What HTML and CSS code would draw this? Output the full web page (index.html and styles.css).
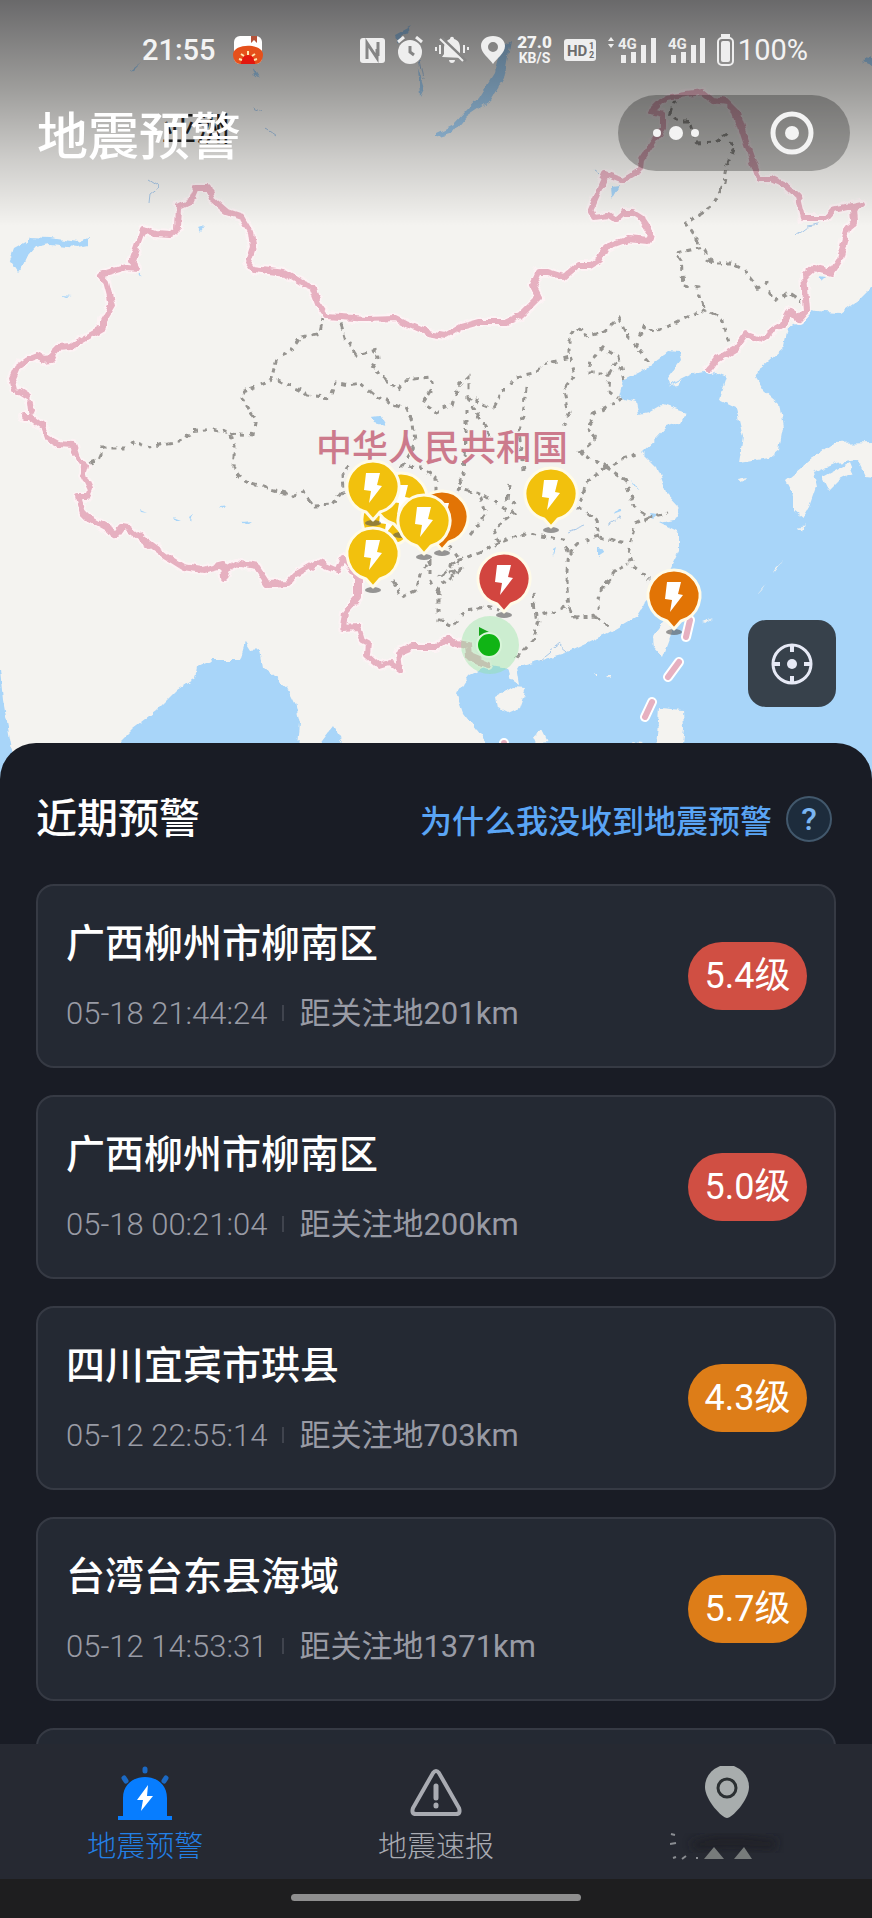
FILE: index.html
```html
<!DOCTYPE html>
<html lang="zh-CN">
  <head>
    <meta charset="UTF-8" />
    <meta name="viewport" content="width=device-width, initial-scale=1.0" />
    <title>地震预警</title>
    <link rel="stylesheet" href="styles.css">
  </head>
  <body>
    <section class="map">
      <svg class="map-canvas" viewBox="0 0 872 780" preserveAspectRatio="xMidYMin slice" aria-hidden="true">
        <defs>
          <!-- roughens coastlines and borders -->
          <filter id="rough" x="0" y="0" width="872" height="780" filterUnits="userSpaceOnUse">
            <feTurbulence type="fractalNoise" baseFrequency="0.1" numOctaves="2" seed="4" result="noise" />
            <feDisplacementMap in="SourceGraphic" in2="noise" scale="7" xChannelSelector="R" yChannelSelector="G" />
          </filter>
          <g id="pin">
            <ellipse cx="0" cy="36" rx="8" ry="3" fill="#555" opacity=".6" />
            <path d="M0 33 L-7 25 A26 26 0 1 1 7 25 Z" stroke="#fffbe8" stroke-width="3" stroke-linejoin="round" />
            <path d="M-7 -14H7L4 -2L9 -1L-4 16L-2 4L-9 3Z" fill="#fff" />
          </g>
          <path id="border" d="M15 390L12 378L17 367L28 359L39 355L42 360L52 359L57 348L70 347L103 328V320L112 305L106 282L100 275L127 267L137 268L132 260L143 229L156 234L170 235L178 228L179 206L192 200L197 188H208L212 199L227 212L242 217L251 232L253 247L248 262L253 269L285 273L300 282L312 287L318 303L327 316L367 319L395 318L405 323L428 333L446 336L461 327L479 322L506 322L521 315L539 297L533 285L539 272H548L564 277L578 265H591L599 260L606 247L628 239L649 241L651 233L641 218L633 213H624L616 220L609 215L594 217L590 210L606 174L622 180L640 169L641 160L663 127V115L651 112L666 97L686 94L703 92L713 100L726 102L736 112L748 148L756 170L759 179H771L786 186L798 197L803 218H826L833 210L861 204L853 208L854 222L848 227L839 260L831 272L814 267L804 276L807 310L798 320L790 312L784 323L769 332L763 340L746 334L736 348L716 360L709 369
            M20 392L28 397M30 403L31 411
            M23 417H30L43 427L47 438L58 444L73 445L78 460L86 465L83 475L90 490L87 497H78L83 513L88 518L117 534L122 527L128 528L152 546L167 557L183 567L203 570L223 565L224 578L228 567L235 563L257 567L268 584L288 583L295 575L317 562L337 571L343 558L358 577V597L345 612L343 628L358 627L362 640L368 643L367 655L380 666L390 663L400 670L398 653L412 647L436 647L449 638L456 643L468 645L469 657L488 665" />
        </defs>

        <rect width="872" height="780" fill="#f4f3f0" />

        <g filter="url(#rough)">
          <!-- seas -->
          <g fill="#a8d5f9">
            <path d="M890 270L872 287L859 300L841 313L823 312L811 310L806 318L788 328L784 347L761 367L756 377L764 390L779 403L783 427L779 450L769 458L739 463L743 437L736 408L719 400L726 377L709 370L693 373L669 385L668 377L681 360L679 352L669 351L649 367L623 380L619 397L636 402L639 415L649 413L663 405L686 413L681 422L666 427L656 438L641 452L656 467L666 493L679 507L674 520L659 523L679 533V550L669 570L649 597L636 617L609 633L566 653L516 667L519 685L511 680L508 668L491 665L469 675L456 693L463 713L486 743L500 790H890Z" />
            <path d="M100 760L118 743L133 728L157 710L177 690L195 678L197 667L213 660L240 660L245 643L250 651L260 650L263 667L287 687L295 703L300 723L297 760Z" />
            <path d="M-10 660L0 670L3 700L12 750L20 790H-10ZM320 744L333 727L343 744Z" />
            <path d="M22 260L18 272L24 264L28 255L35 247L50 244L77 247L88 245V238L78 242L50 238L30 237L24 250Z" />
            <path d="M372 417L380 416L386 426L375 423ZM138 273L144 277L139 275ZM198 228L204 226L200 231ZM61 295L74 296L66 297ZM194 330L201 331ZM140 509L147 512L141 511ZM173 518L181 521L175 521ZM219 506L227 505L222 508ZM241 522L252 521L246 525ZM189 517L193 514L191 521ZM819 276L826 277L822 281ZM612 187L620 186L613 198ZM620 508L614 514L622 511ZM631 480L640 491L634 486ZM598 545L604 554L598 558ZM650 513L659 514L653 519ZM552 550L555 548L553 555Z" />
            <path d="M511 40L504 78L491 100L466 117L453 133L436 138V133L453 125L479 97L494 73L501 47ZM862 62L872 54V66ZM130 70L142 61L134 69ZM252 66L260 79L255 75ZM395 35L412 26L404 36L398 45ZM418 68L424 88L420 96Z" />
            <path d="M10 260L14 249L25 243L28 255L18 272Z" />
          </g>
          <g fill="none" stroke="#a8c8e8" stroke-width="1">
            <path d="M148 180L159 187L150 194L149 203M252 107L263 112M265 128L277 137M592 168L600 175M795 236L807 227L819 225M420 60L424 80M567 532L585 525M607 526L622 516M540 660L560 644L568 651" />
          </g>

          <!-- islands -->
          <g fill="#f4f3f0">
            <path d="M496 697L513 687L526 688L519 708L508 713L498 708Z" />
            <path d="M653 637L666 620L673 630L663 657L654 647Z" />
            <path d="M659 708L683 710L684 730L681 750H656Z" />
            <path d="M890 438L872 442L833 443L813 458L801 468L786 480L794 495V510L803 517L809 507L816 487L813 473L836 463L858 460L866 477L890 480Z" />
            <path d="M823 477L849 463L853 473L839 480L829 490Z" />
            <path d="M737 479L747 477L743 482ZM801 531L804 522L798 529ZM774 572L783 560L776 567ZM757 595L766 584L762 590ZM702 622L713 618L706 623ZM594 672H597V675ZM606 676H610V679ZM668 387L683 379L677 386ZM532 737L542 730L548 742L535 744ZM634 741L643 742L637 746ZM676 699L681 701Z" />
          </g>

          <!-- provinces -->
          <g class="provinces">
            <path d="M90 463L98 460L103 448H128L135 441L150 447L183 440L190 432L213 429L230 433L235 447L233 467L245 482L293 495L303 492L313 506L333 505L343 492L342 473L350 465" />
            <path d="M230 433L252 435L255 418L245 403L240 393L272 380L278 357L290 352L300 338L320 333L323 318" />
            <path d="M278 380L300 390L307 395L330 398L335 382L350 385L360 383L377 397L405 408L413 423L415 443L402 466L420 467L436 478V500" />
            <path d="M338 315L345 337L357 355L377 350L378 358L372 368L398 390L405 380L430 377L433 387L423 403L436 412L453 405L458 387L468 377V397L493 408L503 390L516 377L533 373L546 363L569 357V340L578 327L586 337L603 332L619 318L628 337L636 347L648 362" />
            <path d="M636 347L644 325L653 333L703 310L723 320L729 343" />
            <path d="M703 307L698 287L683 285L681 260L676 253L703 247L711 263H731L744 270L758 288L766 283L774 300L789 293L804 303" />
            <path d="M699 243L686 223L713 205L724 183L728 163L734 148L726 135L716 142L696 143L689 120H676L671 112L676 100" />
            <path d="M624 380L618 357L603 348L591 360L589 373H609L608 390L618 398M609 375L616 360" />
            <path d="M571 357L576 373L564 390L569 413L563 427M526 387L523 417L519 430L523 470" />
            <path d="M623 398L596 413L586 427L596 440L581 452L606 467L619 460L639 453" />
            <path d="M606 467L626 480L633 507L649 517L669 513M649 517L636 523L628 553L633 567L649 580" />
            <path d="M606 467L586 483L579 507L596 520L599 537L626 543M599 537L579 543L569 553L566 580L569 607L574 618L596 617L599 593L616 570L629 563M596 617L609 627" />
            <path d="M456 488L483 495L514 513L493 528L499 543L524 533L564 540L569 553M469 535L486 513L480 495" />
            <path d="M466 410V440L464 473L456 488M468 397L480 420L493 440M510 485L508 500L517 505" />
            <path d="M499 543L479 553L459 560L443 573L460 570L439 587V620L453 627L466 610L486 607L500 610" />
            <path d="M533 593L536 617L569 607M539 620L533 640L516 660M448 545L460 560L450 580" />
            <path d="M392 580L402 597L417 590L420 573L430 560V580L440 595" />
          </g>
          <g fill="none" stroke-linejoin="round" stroke-linecap="round">
            <use href="#border" stroke="#fdf3f5" stroke-width="10" />
            <use href="#border" stroke="#e6b0c0" stroke-width="6" />
          </g>
        </g>

        <g fill="none" stroke-linecap="round">
          <path d="M690 620L686 637M679 662L668 677M652 702L645 717M504 743V748" stroke="#fff" stroke-width="10" />
          <path d="M690 620L686 637M679 662L668 677M652 702L645 717M504 743V748" stroke="#e6b0c0" stroke-width="6" />
        </g>

        <text class="continent" x="162" y="141">亚洲</text>
        <text class="country" x="316" y="461">中华人民共和国</text>

        <!-- my position -->
        <circle cx="490" cy="645" r="29" fill="#8be59a" opacity=".38" />
        <path d="M479 627L489 632L479 636Z" fill="#15a51a" />
        <circle cx="489" cy="645" r="12" fill="#10b415" stroke="#d8f5d9" stroke-width="2" />

        <!-- quake markers -->
        <g fill="#f2c10d">
          <use href="#pin" x="388" y="520" />
          <use href="#pin" x="401" y="499" />
          <use href="#pin" x="442" y="517" fill="#e27405" />
          <use href="#pin" x="424" y="521" />
          <use href="#pin" x="373" y="487" />
          <use href="#pin" x="373" y="554" />
          <use href="#pin" x="551" y="494" />
          <use href="#pin" x="504" y="579" fill="#d2453f" />
          <use href="#pin" x="674" y="596" fill="#e27405" />
        </g>
      </svg>

      <header class="top">
        <div class="status">
          <span class="clock">21:55</span>
          <svg class="app-icon" width="30" height="28" viewBox="0 0 30 28">
            <rect x="1" width="28" height="28" rx="6" fill="#fff" />
            <path d="M18 0H24V7L21 4L18 7Z" fill="#b5533a" />
            <path d="M0 18C1 7 29 7 30 18C30 24 27 28 23 28H7C3 28 0 24 0 18Z" fill="#e5501b" />
            <path d="M8 28C8 16 22 16 22 28Z" fill="#e3170f" />
            <path d="M6 23L9 24M8 18L11 20M15 15V19M22 18L19 20M24 23L21 24" stroke="#ffe6b0" stroke-width="2" />
          </svg>
          <div class="indicators">
            <svg width="25" height="25" viewBox="0 0 25 25">
              <rect width="25" height="25" rx="3" fill="#eee" />
              <path d="M7 21V5L17 20V11M18 4V18" fill="none" stroke="#858585" stroke-width="3" />
            </svg>
            <svg width="26" height="28" viewBox="0 0 26 28">
              <circle cx="13" cy="16" r="12" fill="#eee" />
              <path d="M1 6L7 1M25 6L19 1" stroke="#eee" stroke-width="3" />
              <path d="M13 10V16L17 19" fill="none" stroke="#858585" stroke-width="3" />
            </svg>
            <svg width="34" height="28" viewBox="0 0 34 28">
              <path d="M7 21L9 18V12C9 7 12 4 15 3C15 0 19 0 19 3C23 4 25 7 25 12V18L28 22ZM14 24H20C20 28 14 28 14 24Z" fill="#eee" />
              <path d="M7 2L31 25" stroke="#858585" stroke-width="3" />
              <path d="M5 3L28 25M1 11V15M5 9V18M29 9V17M33 11V14" stroke="#eee" stroke-width="2" />
            </svg>
            <svg width="24" height="28" viewBox="0 0 24 28">
              <path fill-rule="evenodd" d="M12 28C8 22 0 17 0 10C0 4 5 0 12 0S24 4 24 10C24 17 16 22 12 28ZM12 6A5 5 0 1 0 12 16A5 5 0 1 0 12 6Z" fill="#eee" />
            </svg>
            <div class="speed"><b>27.0</b><span>KB/S</span></div>
            <svg width="32" height="22" viewBox="0 0 32 22">
              <rect width="32" height="22" rx="3" fill="#eee" />
              <g fill="#6c6c6c" font-family="Roboto" font-weight="700">
                <text x="3" y="17" font-size="15">HD</text>
                <text x="25" y="10" font-size="9">1</text>
                <text x="25" y="19" font-size="9">2</text>
              </g>
            </svg>
            <svg width="48" height="28" viewBox="0 0 48 28">
              <path d="M0 5L3 1L6 5ZM0 8L3 12L6 8ZM13 19H18V27H13ZM23 16H28V27H23ZM33 9H38V27H33ZM43 2H48V27H43Z" fill="#eee" />
              <text class="net" x="10" y="13">4G</text>
            </svg>
            <svg width="37" height="28" viewBox="0 0 37 28">
              <path d="M3 19H8V27H3ZM13 16H18V27H13ZM23 9H28V27H23ZM32 2H37V27H32Z" fill="#eee" />
              <text class="net" x="0" y="13">4G</text>
            </svg>
            <div class="power">
              <svg width="17" height="32" viewBox="0 0 17 32">
                <path d="M4 0H13V3H4Z" fill="#eee" />
                <rect x="1" y="4" width="15" height="27" rx="4" fill="none" stroke="#eee" stroke-width="2" />
                <rect x="4" y="7" width="9" height="21" rx="2" fill="#eee" />
              </svg>
              <span>100%</span>
            </div>
          </div>
        </div>

        <div class="title-bar">
          <h1>地震预警</h1>
          <div class="capsule">
            <button type="button" aria-label="更多">
              <svg width="46" height="14" viewBox="0 0 46 14" fill="#f3f3f3">
                <circle cx="4" cy="7" r="4" /><circle cx="23" cy="7" r="7" /><circle cx="42" cy="7" r="4" />
              </svg>
            </button>
            <button type="button" aria-label="关闭">
              <svg width="44" height="44" viewBox="0 0 44 44">
                <circle cx="22" cy="22" r="19" fill="none" stroke="#f3f3f3" stroke-width="5" />
                <circle cx="22" cy="22" r="7" fill="#f3f3f3" />
              </svg>
            </button>
          </div>
        </div>
      </header>

      <button class="locate" type="button" aria-label="定位">
        <svg width="42" height="42" viewBox="0 0 42 42" fill="none" stroke="#e6e9f5" stroke-width="3">
          <circle cx="21" cy="21" r="19" />
          <path d="M21 2V9M21 33V40M2 21H9M33 21H40" stroke-width="4" />
          <circle cx="21" cy="21" r="5" fill="#e6e9f5" stroke="none" />
        </svg>
      </button>
    </section>

    <main class="sheet">
      <div class="sheet-head">
        <h2>近期预警</h2>
        <a class="why" href="#">为什么我没收到地震预警 <span class="help">?</span></a>
      </div>

      <div class="list">
        <article class="card">
          <div>
            <h3>广西柳州市柳南区</h3>
            <p class="meta"><time>05-18 21:44:24</time><span class="distance">距关注地201km</span></p>
          </div>
          <span class="level red">5.4级</span>
        </article>
        <article class="card">
          <div>
            <h3>广西柳州市柳南区</h3>
            <p class="meta"><time>05-18 00:21:04</time><span class="distance">距关注地200km</span></p>
          </div>
          <span class="level red">5.0级</span>
        </article>
        <article class="card">
          <div>
            <h3>四川宜宾市珙县</h3>
            <p class="meta"><time>05-12 22:55:14</time><span class="distance">距关注地703km</span></p>
          </div>
          <span class="level orange">4.3级</span>
        </article>
        <article class="card">
          <div>
            <h3>台湾台东县海域</h3>
            <p class="meta"><time>05-12 14:53:31</time><span class="distance">距关注地1371km</span></p>
          </div>
          <span class="level orange">5.7级</span>
        </article>
        <article class="card"></article>
      </div>
    </main>

    <nav class="tabs">
      <a class="tab active" href="#">
        <svg width="54" height="54" viewBox="0 0 54 54">
          <path d="M5 50V32C5 4 49 4 49 32V50H54V54H0V50Z" fill="#077dff" />
          <path d="M27 3V5M6 12L8 15M48 12L46 15" stroke="#1b69c4" stroke-width="5" stroke-linecap="round" />
          <path d="M30 19L19 34H25L23 45L35 30H29Z" fill="#fff" />
        </svg>
        <span>地震预警</span>
      </a>
      <a class="tab" href="#">
        <svg width="54" height="54" viewBox="0 0 54 54" fill="none" stroke="#a9abb2" stroke-linecap="round">
          <path d="M24 7Q27 3 30 7L50 42Q52 48 47 48H7Q2 48 4 42Z" stroke-width="4" />
          <path d="M27 20V32M27 39V40" stroke-width="5" />
        </svg>
        <span>地震速报</span>
      </a>
      <a class="tab" href="#" aria-label="关注地">
        <svg width="54" height="54" viewBox="0 0 54 54">
          <path d="M27 52C22 52 5 34 5 21A22 22 0 0 1 49 21C49 34 32 52 27 52Z" fill="#a8adad" />
          <circle cx="27" cy="22" r="9" fill="none" stroke="#2b3032" stroke-width="3" />
        </svg>
        <svg class="smudge" width="114" height="40" viewBox="0 0 114 40">
          <defs><filter id="soft"><feGaussianBlur stdDeviation="4" /></filter></defs>
          <path d="M20 14L45 8H75L108 12L104 24L60 22L24 24Z" fill="#1b1e24" opacity=".6" filter="url(#soft)" />
          <path d="M34 32L44 20L54 32ZM64 32L74 20L82 32Z" fill="#777b7b" />
          <path d="M1 7L5 8M0 17L6 16M3 31L6 30M12 32L16 29M26 31H28" stroke="#8a8d92" stroke-width="2" />
        </svg>
      </a>
    </nav>
    <div class="home-bar"></div>
  </body>
</html>
```
FILE: styles.css
```css
/* Global Styles */
* {
  margin: 0;
  padding: 0;
  box-sizing: border-box;
}

body {
  display: flex;
  flex-direction: column;
  height: 100vh;
  font-family: Roboto, "Noto Sans CJK SC", sans-serif;
  background: #191c25;
  color: #fff;
  overflow: hidden;
}

button {
  border: none;
  background: none;
  cursor: pointer;
}

a {
  text-decoration: none;
}

svg {
  display: block;
}

/* Map */
.map {
  position: relative;
  flex: none;
  height: 780px;
}

.map-canvas {
  position: absolute;
  inset: 0;
  width: 100%;
  height: 100%;
}

.provinces {
  fill: none;
  stroke: #969490;
  stroke-width: 3;
  stroke-dasharray: 5 5;
}

.continent {
  font-size: 34px;
  fill: #222;
}

.country {
  font-size: 36px;
  font-weight: 500;
  fill: #cc7a8c;
}

/* Status bar and title over the map */
.top {
  position: relative;
  height: 226px;
  padding-top: 30px;
  background: linear-gradient(
    rgba(0, 0, 5, 0.57),
    rgba(0, 0, 0, 0.35) 40%,
    rgba(0, 0, 0, 0.16) 70%,
    rgba(0, 0, 0, 0)
  );
}

.status {
  display: flex;
  align-items: center;
  height: 40px;
  padding: 0 64px 0 142px;
  color: #f3f3f3;
  font-size: 29px;
}

.clock {
  font-weight: 500;
}

.app-icon {
  margin-left: 17px;
}

.indicators {
  display: flex;
  align-items: center;
  gap: 12px;
  margin-left: auto;
}

.speed {
  display: flex;
  flex-direction: column;
  align-items: center;
  font-size: 14px;
  font-weight: 700;
  line-height: 16px;
}

.speed b {
  font-size: 17px;
}

.net {
  font-size: 15px;
  font-weight: 700;
  fill: #eee;
}

.power {
  display: flex;
  align-items: center;
  gap: 4px;
}

.title-bar {
  display: flex;
  justify-content: space-between;
  align-items: center;
  height: 76px;
  margin-top: 25px;
  padding: 0 22px 0 37px;
}

.title-bar h1 {
  font-size: 51px;
  font-weight: 500;
}

.capsule {
  display: flex;
  width: 232px;
  height: 76px;
  border-radius: 38px;
  background: rgba(0, 0, 0, 0.27);
}

.capsule button {
  flex: 1;
  display: flex;
  justify-content: center;
  align-items: center;
}

.locate {
  position: absolute;
  right: 36px;
  bottom: 73px;
  display: flex;
  justify-content: center;
  align-items: center;
  width: 88px;
  height: 87px;
  border-radius: 18px;
  background: #37414b;
}

/* Warning list */
.sheet {
  position: relative;
  flex: 1;
  min-height: 0;
  margin-top: -37px;
  padding: 46px 36px 0;
  border-radius: 36px 36px 0 0;
  background: #191c25;
  overflow: hidden;
}

.sheet-head {
  display: flex;
  justify-content: space-between;
  align-items: center;
  height: 60px;
  margin-bottom: 35px;
  padding-right: 4px;
}

.sheet-head h2 {
  font-size: 41px;
  font-weight: 500;
  line-height: 56px;
}

.why {
  display: flex;
  align-items: center;
  gap: 14px;
  color: #5aa5f5;
  font-size: 32px;
  font-weight: 500;
}

.help {
  display: flex;
  justify-content: center;
  align-items: center;
  width: 46px;
  height: 46px;
  border: 2px solid #42586c;
  border-radius: 50%;
  background: #1d2c3c;
  color: #7ab5f2;
}

.list {
  display: flex;
  flex-direction: column;
  gap: 27px;
}

.card {
  display: flex;
  justify-content: space-between;
  align-items: center;
  min-height: 184px;
  padding: 32px 27px 32px 28px;
  border: 2px solid #363a44;
  border-radius: 18px;
  background: #242933;
}

.card h3 {
  margin-bottom: 25px;
  font-size: 39px;
  font-weight: 500;
  line-height: 50px;
}

.meta {
  display: flex;
  align-items: center;
  color: #999ba5;
  font-size: 31px;
  line-height: 40px;
}

.meta time {
  font-weight: 300;
}

.distance::before {
  content: "";
  display: inline-block;
  width: 2px;
  height: 16px;
  margin: 0 15px;
  vertical-align: 3px;
  background: #40444e;
}

.level {
  width: 119px;
  border-radius: 34px;
  font-size: 36px;
  line-height: 68px;
  text-align: center;
}

.red {
  background: #d04f43;
}

.orange {
  background: #dd7d18;
}

/* Bottom tabs */
.tabs {
  position: relative;
  flex: none;
  display: flex;
  height: 135px;
  padding-top: 22px;
  background: #262932;
}

.tab {
  flex: 1;
  display: flex;
  flex-direction: column;
  align-items: center;
  gap: 7px;
  color: #a9abb2;
  font-size: 29px;
  font-weight: 300;
  line-height: 40px;
}

.tab.active {
  color: #2380e6;
}

.home-bar {
  flex: none;
  display: flex;
  justify-content: center;
  height: 39px;
  padding-top: 15px;
  background: #1e1e1f;
}

.home-bar::before {
  content: "";
  width: 290px;
  height: 7px;
  border-radius: 4px;
  background: #8f8f8f;
}
```
